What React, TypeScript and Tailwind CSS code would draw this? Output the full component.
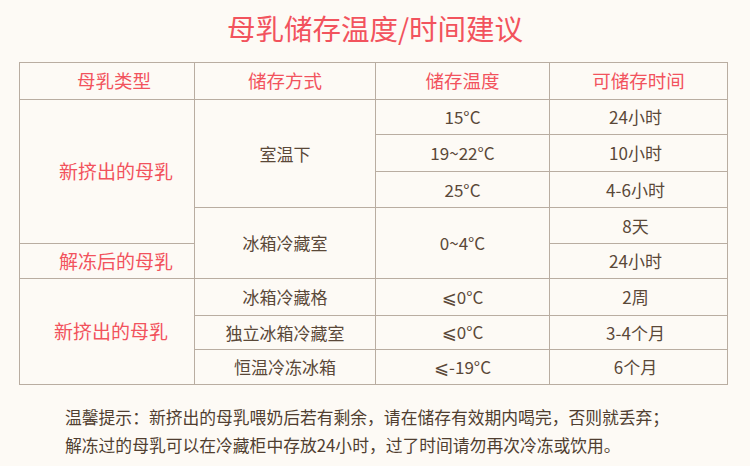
import React from "react";

const red = "text-[#f2535d]";
const brown = "text-[#5a4838]";
const cell = "border-[1.5px] border-[#b9ada1] text-center align-middle p-0";

function Le() {
  return <span className="text-[18px]" style={{ fontFamily: '"DejaVu Sans", sans-serif' }}>⩽</span>;
}

export default function App() {
  const font = { fontFamily: '"Noto Sans CJK SC", "Noto Sans", sans-serif' };
  return (
    <div className="w-[750px] h-[466px] bg-[#fdfaf5] overflow-hidden" style={font}>
      <div className="h-[62px] pt-[13px]">
        <h1 className={`text-center text-[28.5px] leading-[30px] font-normal ${red}`}>母乳储存温度/时间建议</h1>
      </div>
      <table className="ml-[19px] w-[708px] table-fixed border-collapse">
        <colgroup>
          <col className="w-[175px]" />
          <col className="w-[181px]" />
          <col className="w-[174px]" />
          <col className="w-[178px]" />
        </colgroup>
        <tbody>
          <tr className="h-[37px]">
            <td className={`${cell} ${red} text-[18.5px] pl-[14px]`}>母乳类型</td>
            <td className={`${cell} ${red} text-[18.5px]`}>储存方式</td>
            <td className={`${cell} ${red} text-[18.5px]`}>储存温度</td>
            <td className={`${cell} ${red} text-[18.5px]`}>可储存时间</td>
          </tr>
          <tr className="h-[35px]">
            <td rowSpan={4} className={`${cell} ${red} text-[19px] pl-[18px]`}>新挤出的母乳</td>
            <td rowSpan={3} className={`${cell} ${brown} text-[17px]`}>室温下</td>
            <td className={`${cell} ${brown} text-[17px]`}>15°C</td>
            <td className={`${cell} ${brown} text-[17px] pr-[6px]`}>24小时</td>
          </tr>
          <tr className="h-[37px]">
            <td className={`${cell} ${brown} text-[17px]`}>19~22°C</td>
            <td className={`${cell} ${brown} text-[17px] pr-[6px]`}>10小时</td>
          </tr>
          <tr className="h-[36px]">
            <td className={`${cell} ${brown} text-[17px]`}>25°C</td>
            <td className={`${cell} ${brown} text-[17px] pr-[6px]`}>4-6小时</td>
          </tr>
          <tr className="h-[36px]">
            <td rowSpan={2} className={`${cell} ${brown} text-[17px]`}>冰箱冷藏室</td>
            <td rowSpan={2} className={`${cell} ${brown} text-[17px]`}>0~4°C</td>
            <td className={`${cell} ${brown} text-[17px] pr-[6px]`}>8天</td>
          </tr>
          <tr className="h-[35px]">
            <td className={`${cell} ${red} text-[19px] pl-[18px]`}>解冻后的母乳</td>
            <td className={`${cell} ${brown} text-[17px] pr-[6px]`}>24小时</td>
          </tr>
          <tr className="h-[37px]">
            <td rowSpan={3} className={`${cell} ${red} text-[19px] pl-[8px]`}>新挤出的母乳</td>
            <td className={`${cell} ${brown} text-[17px]`}>冰箱冷藏格</td>
            <td className={`${cell} ${brown} text-[17px]`}><Le />0°C</td>
            <td className={`${cell} ${brown} text-[17px] pr-[6px]`}>2周</td>
          </tr>
          <tr className="h-[34px]">
            <td className={`${cell} ${brown} text-[17px]`}>独立冰箱冷藏室</td>
            <td className={`${cell} ${brown} text-[17px]`}><Le />0°C</td>
            <td className={`${cell} ${brown} text-[17px] pr-[6px]`}>3-4个月</td>
          </tr>
          <tr className="h-[35px]">
            <td className={`${cell} ${brown} text-[17px]`}>恒温冷冻冰箱</td>
            <td className={`${cell} ${brown} text-[17px]`}><Le />-19°C</td>
            <td className={`${cell} ${brown} text-[17px] pr-[6px]`}>6个月</td>
          </tr>
        </tbody>
      </table>
      <div className={`mt-[18px] pl-[65px] text-[16.8px] leading-[28px] text-[#503e30]`}>
        <p>温馨提示：新挤出的母乳喂奶后若有剩余，请在储存有效期内喝完，否则就丢弃；</p>
        <p>解冻过的母乳可以在冷藏柜中存放24小时，过了时间请勿再次冷冻或饮用。</p>
      </div>
    </div>
  );
}
